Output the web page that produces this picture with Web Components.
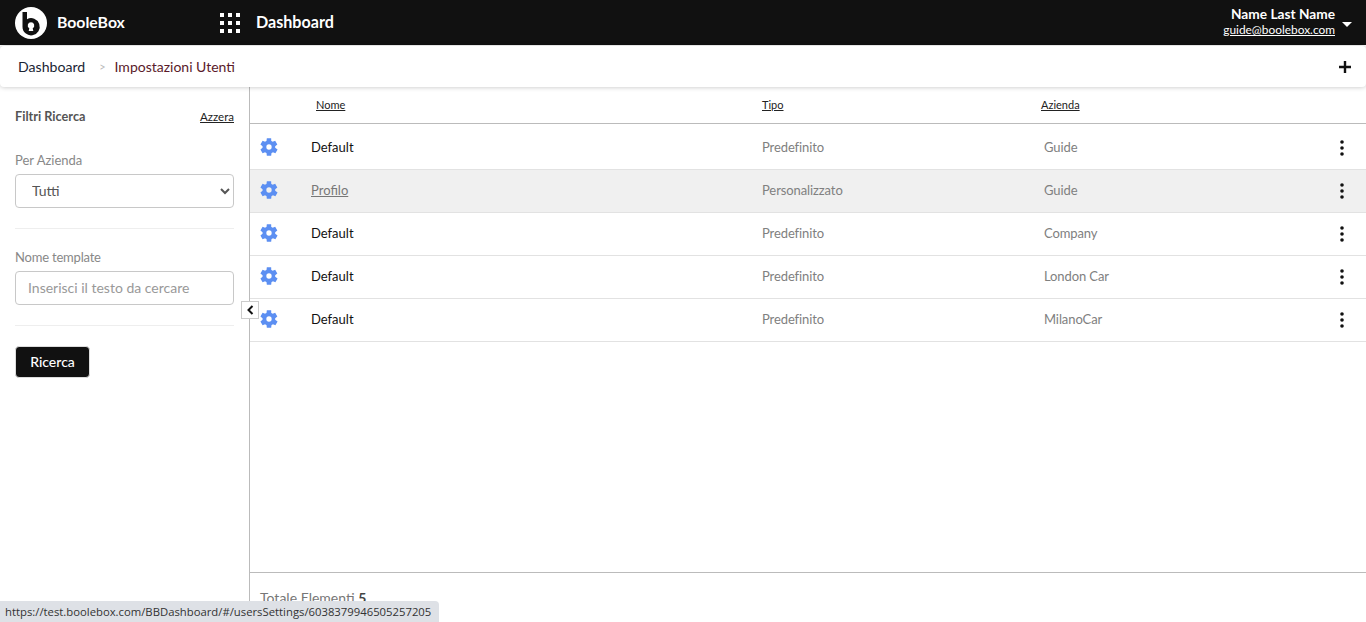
<!DOCTYPE html>
<html lang="it">
<head>
<meta charset="utf-8">
<title>BooleBox</title>
<style>
  html, body { margin: 0; height: 100%; overflow: hidden; background: #fff; }
  body { font-family: Lato, "Liberation Sans", sans-serif; }
</style>
</head>
<body>
<settings-page></settings-page>

<script>
class AppHeader extends HTMLElement {
  constructor() {
    super();
    this.attachShadow({ mode: "open" });
    this.shadowRoot.innerHTML = /* html */ `
      <style>
        :host {
          display: flex;
          align-items: center;
          height: 45px;
          background: #111;
          color: #fff;
          flex: none;
        }
        .logo { margin-left: 15px; width: 32px; height: 32px; flex: none; display: block; }
        .brand { margin: -2px 0 0 10px; width: 163px; font-size: 15.8px; font-weight: 700; }
        .apps { width: 20px; height: 20px; display: block; flex: none; }
        .title { margin: -2px 0 0 16px; font-size: 16.1px; font-weight: 700; flex: 1; }
        .user { text-align: right; line-height: 15px; margin-top: -1px; }
        .name { font-size: 13.7px; font-weight: 700; margin-top: -1px; }
        .mail { font-size: 11.9px; color: #fff; text-decoration: underline; display: block; margin-top: 1px; }
        .caret {
          margin: 4px 14px 0 7px;
          border-left: 5px solid transparent;
          border-right: 5px solid transparent;
          border-top: 5px solid #fff;
        }
      </style>
      <svg class="logo" viewBox="0 0 32 32">
        <circle cx="16" cy="16" r="16" fill="#fff"/>
        <path fill="#111" d="M7.500 5H12v7.200a8.600 8.600 0 1 1-4.500 7.500z"/>
        <path fill="#fff" d="M16 15.200a3.300 3.300 0 0 1 1.700 6.100l.6 2.700h-4.600l.6-2.700a3.300 3.300 0 0 1 1.700-6.100z"/>
      </svg>
      <span class="brand">BooleBox</span>
      <svg class="apps" viewBox="0 0 20 20" fill="#fff">
        <rect x="0" y="0" width="4" height="4"/><rect x="8" y="0" width="4" height="4"/><rect x="16" y="0" width="4" height="4"/>
        <rect x="0" y="8" width="4" height="4"/><rect x="8" y="8" width="4" height="4"/><rect x="16" y="8" width="4" height="4"/>
        <rect x="0" y="16" width="4" height="4"/><rect x="8" y="16" width="4" height="4"/><rect x="16" y="16" width="4" height="4"/>
      </svg>
      <span class="title">Dashboard</span>
      <div class="user">
        <div class="name">Name Last Name</div>
        <a class="mail">guide@boolebox.com</a>
      </div>
      <span class="caret"></span>
    `;
  }
}

class BreadcrumbBar extends HTMLElement {
  constructor() {
    super();
    this.attachShadow({ mode: "open" });
    this.shadowRoot.innerHTML = /* html */ `
      <style>
        :host {
          display: flex;
          align-items: center;
          height: 41px;
          margin-top: 1px;
          padding: 0 15px 0 18px;
          background: #fff;
          border-radius: 4px;
          box-shadow: 0 0 5px rgba(0, 0, 0, 0.25);
          font-size: 14.1px;
          position: relative;
          z-index: 2;
          flex: none;
        }
        .home { color: #1a2433; }
        .sep { color: #bbb; font-size: 11px; margin: 0 9px 0 14px; }
        .current { color: #5a1a2a; font-size: 14px; flex: 1; }
        svg { width: 12px; height: 12px; display: block; }
      </style>
      <span class="home">Dashboard</span>
      <span class="sep">&gt;</span>
      <span class="current">Impostazioni Utenti</span>
      <svg viewBox="0 0 12 12"><path fill="#111" d="M4.800 0h2.400v4.800H12v2.400H7.200V12H4.800V7.200H0V4.800h4.800z"/></svg>
    `;
  }
}

class FilterPanel extends HTMLElement {
  constructor() {
    super();
    this.attachShadow({ mode: "open" });
    this.shadowRoot.innerHTML = /* html */ `
      <style>
        :host {
          display: flex;
          flex-direction: column;
          width: 219px;
          padding: 0 15px;
          border-right: 1px solid #bbb;
          flex: none;
          color: #888;
          font-size: 13px;
        }
        .head {
          display: flex;
          justify-content: space-between;
          align-items: center;
          margin-top: 21px;
          height: 17px;
        }
        .head b { color: #555; font-size: 12.7px; margin-top: -2px; }
        .head a { color: #222; font-size: 11.5px; text-decoration: underline; }
        label { display: block; line-height: 16px; margin-bottom: 6px; }
        .first { margin-top: 27px; }
        .tight { letter-spacing: -0.2px; }
        select, input {
          display: block;
          box-sizing: border-box;
          width: 219px;
          height: 34px;
          border: 1px solid #c8c8c8;
          border-radius: 4px;
          background: #fff;
          font: 14px Lato, "Liberation Sans", sans-serif;
          color: #555;
          outline: none;
        }
        select { padding: 0 0 2px 12px; }
        input { padding: 0 0 2px 12px; }
        input::placeholder { color: #999; opacity: 1; }
        hr { border: 0; border-top: 1px solid #eee; margin: 20px 0; width: 219px; }
        button {
          width: 75px;
          height: 32px;
          border: 1px solid #ddd;
          border-radius: 4px;
          background: #111;
          color: #fff;
          font: 500 14px Lato, "Liberation Sans", sans-serif;
          padding: 0 0 2px;
        }
      </style>
      <div class="head"><b>Filtri Ricerca</b><a>Azzera</a></div>
      <label class="first">Per Azienda</label>
      <select><option>Tutti</option></select>
      <hr>
      <label class="tight">Nome template</label>
      <input placeholder="Inserisci il testo da cercare">
      <hr>
      <button>Ricerca</button>
    `;
  }
}

class TemplateRow extends HTMLElement {
  connectedCallback() {
    if (this.shadowRoot) return;
    this.attachShadow({ mode: "open" });
    const active = this.hasAttribute("active");
    this.shadowRoot.innerHTML = /* html */ `
      <style>
        :host {
          display: grid;
          grid-template-columns: 61px 451px 282px 1fr 48px;
          align-items: center;
          box-sizing: border-box;
          height: 43px;
          padding-bottom: 2px;
          border-bottom: 1px solid #e2e2e2;
          font-size: 13px;
          color: #808080;
          background: ${active ? "#f0f0f0" : "#fff"};
        }
        :host([first]) { height: 46px; padding-bottom: 0; }
        .gear { width: 20px; height: 20px; display: block; margin-left: 9px; }
        .name { color: ${active ? "#777" : "#111"}; text-decoration: ${active ? "underline" : "none"}; }
        .meta { letter-spacing: -0.1px; }
        .dots { width: 4px; height: 16px; display: block; margin: 2px 0 0 22px; }
      </style>
      <svg class="gear" viewBox="0 0 24 24"><path fill="#5c8ff2" d="M19.400 13a7.700 7.700 0 0 0 0-2l2.600-2-2.600-4.500-3 1.200a7.500 7.500 0 0 0-1.700-1L14.600 1.500H9.400l-.4 3.200a7.500 7.500 0 0 0-1.700 1l-3-1.200L1.700 9l2.600 2a7.700 7.700 0 0 0 0 2l-2.600 2 2.600 4.500 3-1.200a7.500 7.500 0 0 0 1.700 1l.4 3.200h5.200l.4-3.200a7.500 7.500 0 0 0 1.700-1l3 1.200L22.300 15zM12 15.200a3.200 3.200 0 1 1 0-6.400 3.200 3.200 0 0 1 0 6.400z"/></svg>
      <span class="name">${this.getAttribute("name")}</span>
      <span class="meta">${this.getAttribute("kind")}</span>
      <span class="meta">${this.getAttribute("company")}</span>
      <svg class="dots" viewBox="0 0 4 16" fill="#111"><circle cx="2" cy="2" r="1.800"/><circle cx="2" cy="8" r="1.800"/><circle cx="2" cy="14" r="1.800"/></svg>
    `;
  }
}

class TemplateTable extends HTMLElement {
  constructor() {
    super();
    this.attachShadow({ mode: "open" });
    this.shadowRoot.innerHTML = /* html */ `
      <style>
        :host {
          display: flex;
          flex-direction: column;
          flex: 1;
          min-width: 0;
        }
        .head {
          display: grid;
          grid-template-columns: 66px 446px 279px 1fr;
          align-items: center;
          box-sizing: border-box;
          height: 37px;
          padding-bottom: 2px;
          border-bottom: 1px solid #bbb;
          font-size: 11px;
          color: #222;
          text-decoration: underline;
          flex: none;
        }
        .rows { flex: 1; }
        .foot {
          height: 33px;
          border-top: 1px solid #bbb;
          padding: 16px 0 0 10px;
          font-size: 14px;
          color: #777;
          flex: none;
        }
        .foot b { color: #444; }
      </style>
      <div class="head"><span></span><span>Nome</span><span>Tipo</span><span>Azienda</span></div>
      <div class="rows"><slot></slot></div>
      <div class="foot">Totale Elementi <b>5</b></div>
    `;
  }
}

class SettingsPage extends HTMLElement {
  constructor() {
    super();
    this.attachShadow({ mode: "open" });
    this.shadowRoot.innerHTML = /* html */ `
      <style>
        :host {
          display: flex;
          flex-direction: column;
          height: 622px;
          position: relative;
          overflow: hidden;
        }
        .body { display: flex; flex: 1; min-height: 0; }
        .toggle {
          position: absolute;
          left: 241px;
          top: 301px;
          width: 16px;
          height: 16px;
          border: 1px solid #ccc;
          background: #fff;
          display: flex;
          align-items: center;
          justify-content: center;
        }
        .toggle svg { width: 7px; height: 10px; display: block; }
        .status {
          position: absolute;
          left: 0;
          bottom: 0;
          height: 21px;
          padding: 0 8px 0 5px;
          background: #dee1e6;
          border-top-right-radius: 4px;
          font: 11.3px/21px "Open Sans", "Liberation Sans", sans-serif;
          color: #333;
        }
      </style>
      <app-header></app-header>
      <breadcrumb-bar></breadcrumb-bar>
      <div class="body">
        <filter-panel></filter-panel>
        <template-table>
          <template-row first name="Default" kind="Predefinito" company="Guide"></template-row>
          <template-row active name="Profilo" kind="Personalizzato" company="Guide"></template-row>
          <template-row name="Default" kind="Predefinito" company="Company"></template-row>
          <template-row name="Default" kind="Predefinito" company="London Car"></template-row>
          <template-row name="Default" kind="Predefinito" company="MilanoCar"></template-row>
        </template-table>
      </div>
      <div class="toggle"><svg viewBox="0 0 7 10"><path fill="none" stroke="#111" stroke-width="2" d="M5.500 1 1.500 5l4 4"/></svg></div>
      <div class="status">https://test.boolebox.com/BBDashboard/#/usersSettings/6038379946505257205</div>
    `;
  }
}

customElements.define("app-header", AppHeader);
customElements.define("breadcrumb-bar", BreadcrumbBar);
customElements.define("filter-panel", FilterPanel);
customElements.define("template-row", TemplateRow);
customElements.define("template-table", TemplateTable);
customElements.define("settings-page", SettingsPage);
</script>
</body>
</html>
